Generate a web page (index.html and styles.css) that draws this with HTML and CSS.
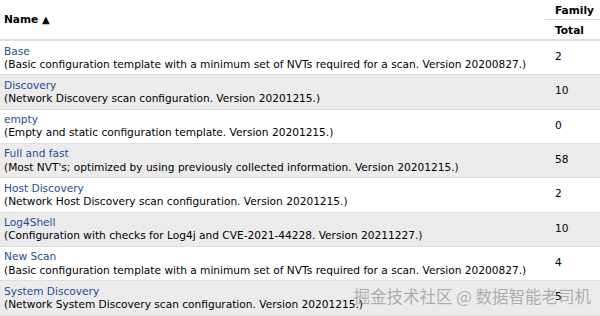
FILE: index.html
```html
<!DOCTYPE html>
<html lang="en">
<head>
    <meta charset="UTF-8">
    <title>Scan Configs</title>
    <link rel="stylesheet" href="styles.css">
</head>
<body>
    <table class="configs">
        <thead>
            <tr>
                <th class="col-name" rowspan="2">Name <span class="sort">&#9650;</span></th>
                <th class="col-family top">Family</th>
            </tr>
            <tr>
                <th class="col-family">Total</th>
            </tr>
        </thead>
        <tbody>
            <tr>
                <td><a href="#">Base</a><div class="comment">(Basic configuration template with a minimum set of NVTs required for a scan. Version 20200827.)</div></td>
                <td class="num">2</td>
            </tr>
            <tr>
                <td><a href="#">Discovery</a><div class="comment">(Network Discovery scan configuration. Version 20201215.)</div></td>
                <td class="num">10</td>
            </tr>
            <tr>
                <td><a href="#">empty</a><div class="comment">(Empty and static configuration template. Version 20201215.)</div></td>
                <td class="num">0</td>
            </tr>
            <tr>
                <td><a href="#">Full and fast</a><div class="comment">(Most NVT's; optimized by using previously collected information. Version 20201215.)</div></td>
                <td class="num">58</td>
            </tr>
            <tr>
                <td><a href="#">Host Discovery</a><div class="comment">(Network Host Discovery scan configuration. Version 20201215.)</div></td>
                <td class="num">2</td>
            </tr>
            <tr>
                <td><a href="#">Log4Shell</a><div class="comment">(Configuration with checks for Log4j and CVE-2021-44228. Version 20211227.)</div></td>
                <td class="num">10</td>
            </tr>
            <tr>
                <td><a href="#">New Scan</a><div class="comment">(Basic configuration template with a minimum set of NVTs required for a scan. Version 20200827.)</div></td>
                <td class="num">4</td>
            </tr>
            <tr>
                <td><a href="#">System Discovery</a><div class="comment">(Network System Discovery scan configuration. Version 20201215.)</div></td>
                <td class="num">5</td>
            </tr>
        </tbody>
    </table>

    <div class="watermark">掘金技术社区 @ 数据智能老司机</div>
</body>
</html>
```

FILE: styles.css
```css
* {
    margin: 0;
    padding: 0;
    box-sizing: border-box;
}

body {
    font-family: "DejaVu Sans", sans-serif;
    font-size: 10.6px;
    color: #000;
    background-color: #fff;
    overflow: hidden;
    position: relative;
}

.configs {
    width: 600px;
    border-collapse: collapse;
    table-layout: fixed;
}

.configs th {
    text-align: left;
    font-weight: bold;
    padding: 3.5px 4px;
    line-height: 12px;
}

.configs th.col-name {
    width: 545px;
    vertical-align: middle;
    border-bottom: 2px solid #dcdcdc;
}

.configs th.col-family {
    padding-left: 10px;
    border-bottom: 2px solid #dcdcdc;
}

.configs th.top {
    border-bottom: 1px solid #dcdcdc;
}

.sort {
    font-size: 10px;
}

.configs td {
    padding: 3.5px 4px;
    line-height: 13.15px;
    vertical-align: top;
    border-bottom: 1px solid #dedede;
}

.comment {
    white-space: nowrap;
}

.configs td.num {
    padding-left: 10px;
    padding-top: 9px;
}

.configs tbody tr:nth-child(even) {
    background-color: #ebebeb;
}

.configs a {
    color: #1d4c9f;
    text-decoration: none;
}

.watermark {
    position: absolute;
    right: 9px;
    top: 284px;
    font-family: "Noto Sans CJK SC", sans-serif;
    font-size: 16.5px;
    color: rgba(110, 110, 110, 0.5);
    white-space: nowrap;
}
```
